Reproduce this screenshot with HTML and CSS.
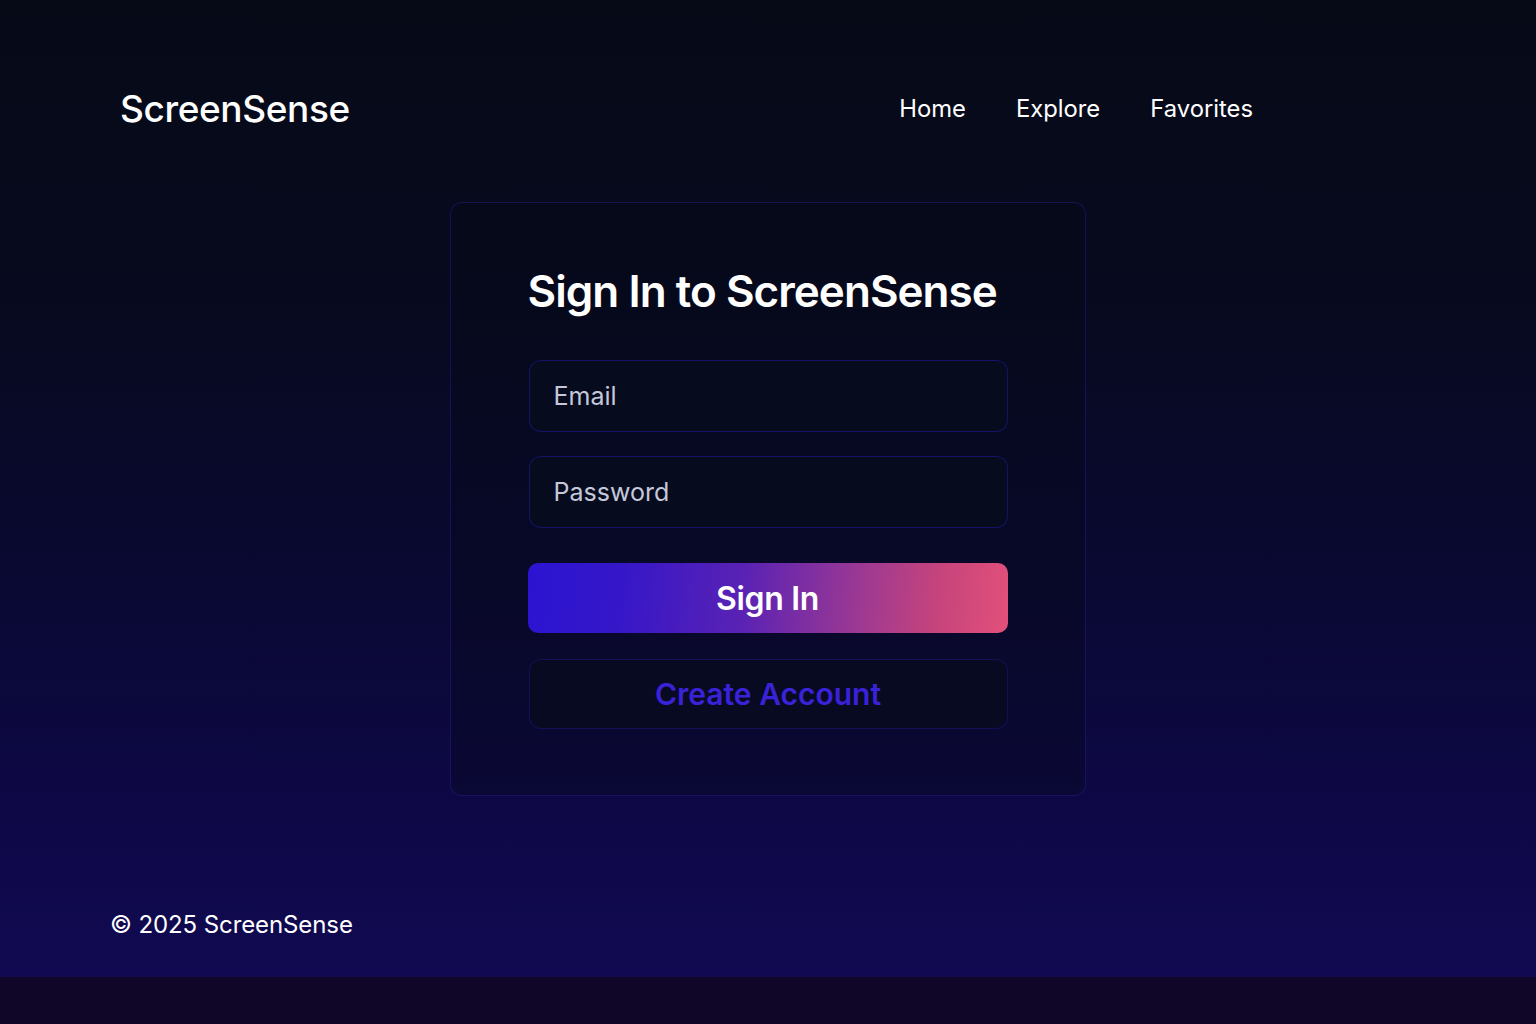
FILE: index.html
```html
<!DOCTYPE html>
<html lang="en">
<head>
<meta charset="utf-8">
<title>ScreenSense – Sign In</title>
<link rel="stylesheet" href="styles.css">
</head>
<body>
<div class="page">
  <header class="header">
    <div class="logo">ScreenSense</div>
    <nav class="nav">
      <a href="#">Home</a>
      <a href="#">Explore</a>
      <a href="#">Favorites</a>
    </nav>
  </header>
  <main class="main">
    <section class="card">
      <h1 class="title">Sign In to ScreenSense</h1>
      <form class="form">
        <input class="field" type="email" placeholder="Email">
        <input class="field" type="password" placeholder="Password">
        <button type="button" class="btn-primary">Sign In</button>
        <button type="button" class="btn-secondary">Create Account</button>
      </form>
    </section>
  </main>
  <footer class="footer">© 2025 ScreenSense</footer>
</div>
<div class="bottom-bar"></div>
</body>
</html>
```
FILE: styles.css
```css
* { box-sizing: border-box; }
html, body { margin: 0; padding: 0; }
body {
  font-family: Inter, "Noto Sans", sans-serif;
  background: #0e0527;
  color: #fff;
}
.page {
  height: 977px;
  display: flex;
  flex-direction: column;
  background: linear-gradient(180deg, #060a17 0%, #070a1e 30%, #0a0933 60%, #0e0848 85%, #110a52 100%);
}
.bottom-bar { height: 47px; background: #0f0628; }
.header {
  display: flex;
  justify-content: space-between;
  align-items: center;
  padding: 86px 283px 0 120px;
  height: 132px;
}
.logo {
  font-size: 37px;
  font-weight: 500;
  letter-spacing: -0.4px;
  line-height: 46px;
}
.nav { display: flex; gap: 50px; }
.nav a {
  color: #fff;
  text-decoration: none;
  font-size: 23.8px;
  line-height: 32px;
}
.main {
  display: flex;
  justify-content: center;
  padding-top: 70px;
  padding-right: 1px;
}
.card {
  width: 636px;
  height: 594px;
  border: 1px solid rgba(40, 30, 150, 0.45);
  border-radius: 12px;
  background: rgba(6, 9, 24, 0.35);
  padding: 60px 78px 0 77px;
}
.title {
  margin: 0;
  font-size: 44px;
  font-weight: 600;
  letter-spacing: -0.95px;
  line-height: 56px;
  color: #fff;
}
.form {
  display: flex;
  flex-direction: column;
  margin-top: 41px;
}
.field {
  width: 479px;
  height: 72px;
  margin-left: 1px;
  border: 1px solid rgba(35, 25, 160, 0.55);
  border-radius: 12px;
  background: #070b1e;
  padding: 0 24px;
  font-family: inherit;
  font-size: 25px;
  color: #c5c8da;
  outline: none;
}
.field::placeholder { color: #c5c8da; }
.field + .field { margin-top: 24px; }
.btn-primary {
  margin-top: 35px;
  width: 480px;
  height: 70px;
  border: none;
  border-radius: 10px;
  background: linear-gradient(95deg, #2b14d2 0%, #3617c8 20%, #5a22b4 45%, #9a3894 68%, #c6447c 85%, #e2507a 100%);
  color: #fff;
  font-family: inherit;
  font-size: 32px;
  font-weight: 600;
  letter-spacing: -0.3px;
}
.btn-secondary {
  margin-top: 26px;
  margin-left: 1px;
  width: 479px;
  height: 70px;
  border: 1px solid rgba(35, 25, 150, 0.45);
  border-radius: 12px;
  background: #080a22;
  color: #3a22d9;
  font-family: inherit;
  font-size: 30px;
  font-weight: 600;
}
.footer {
  margin-top: auto;
  padding: 0 0 36px 110px;
  font-size: 24px;
  letter-spacing: -0.1px;
  line-height: 32px;
}
```
